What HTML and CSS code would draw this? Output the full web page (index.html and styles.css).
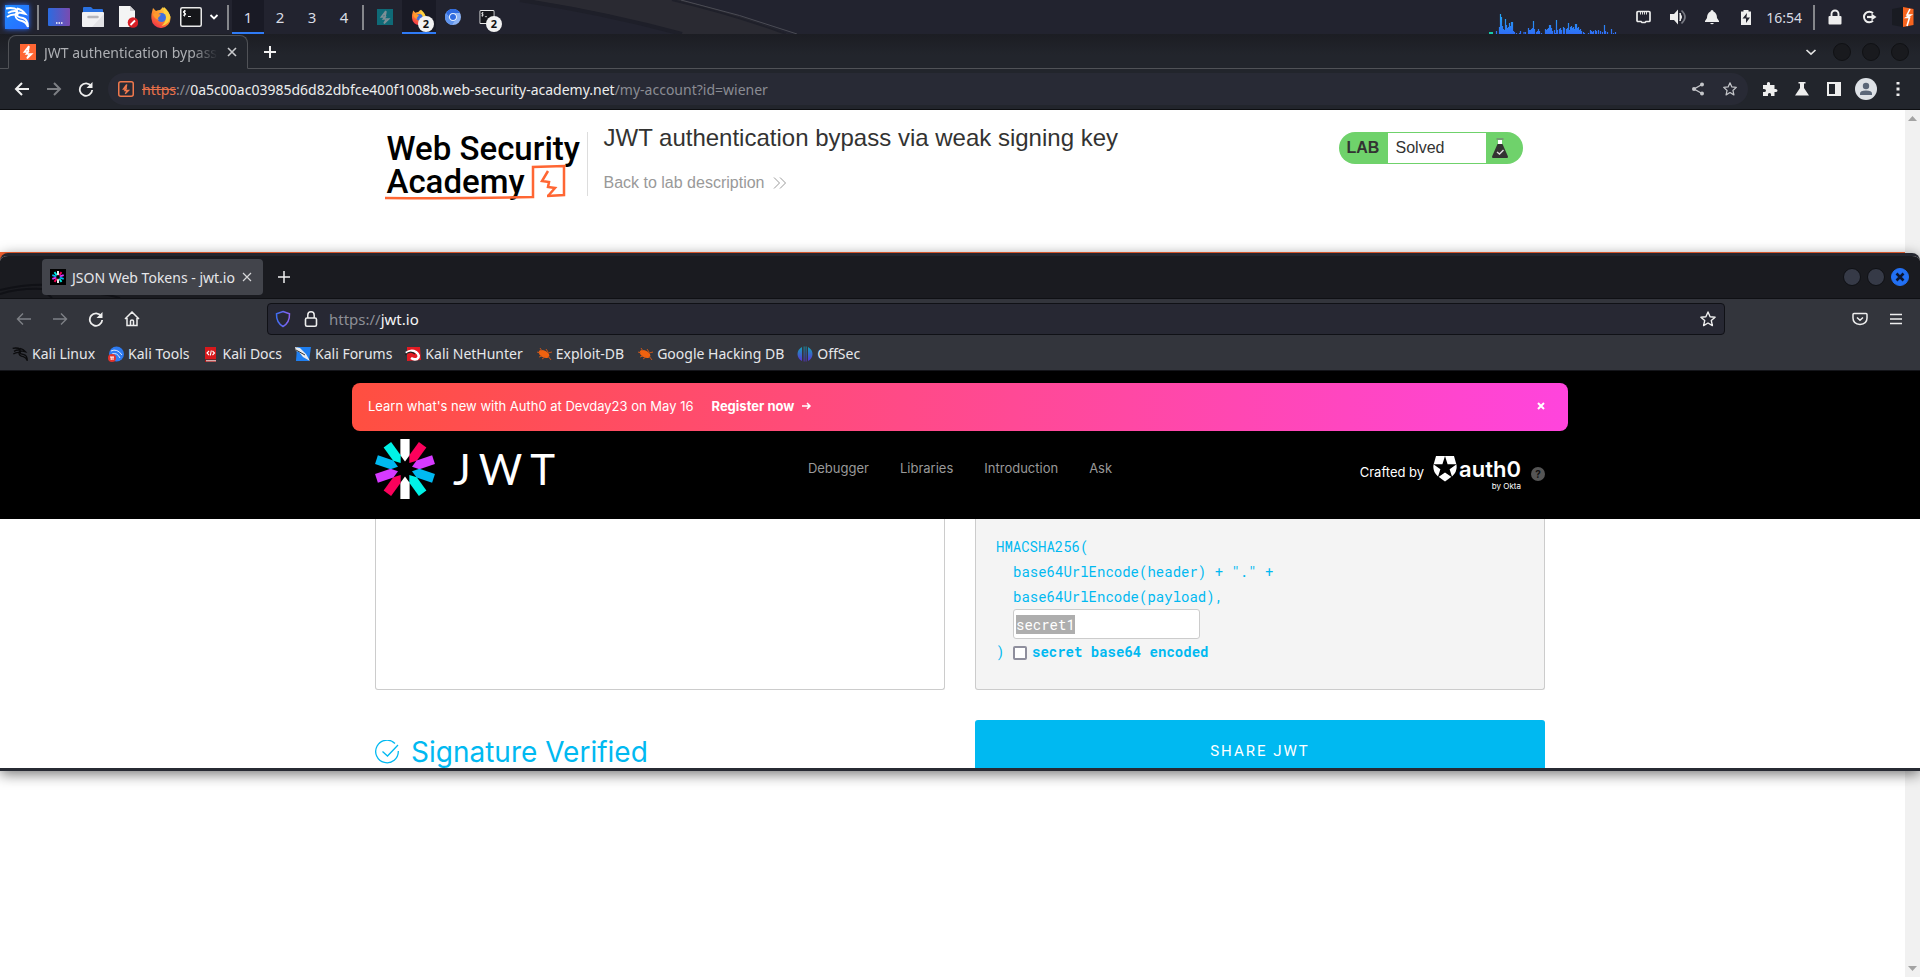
FILE: index.html
```html
<!DOCTYPE html>
<html lang="en">
<head>
<meta charset="utf-8">
<title>Desktop</title>
<link rel="stylesheet" href="styles.css">
</head>
<body>
<svg class="defs" aria-hidden="true">
  <defs>
    <linearGradient id="g-blue" x1="0" y1="0" x2="1" y2="1"><stop offset="0" stop-color="#1e8bff"/><stop offset="1" stop-color="#2a6bff"/></linearGradient>
    <linearGradient id="g-desk" x1="0" y1="0" x2="1" y2="0"><stop offset="0" stop-color="#2b6be0"/><stop offset="1" stop-color="#7a4bb0"/></linearGradient>
    <linearGradient id="g-fox" x1="0.8" y1="0" x2="0.2" y2="1"><stop offset="0" stop-color="#ffe04a"/><stop offset="0.5" stop-color="#ff8a2a"/><stop offset="1" stop-color="#f0284e"/></linearGradient>
    <linearGradient id="g-cpu" x1="0" y1="0" x2="0" y2="20" gradientUnits="userSpaceOnUse"><stop offset="0" stop-color="#22a8f5"/><stop offset="1" stop-color="#2f6df6"/></linearGradient>
    <linearGradient id="g-shield" x1="0" y1="0" x2="1" y2="0"><stop offset="0" stop-color="#3d6df0"/><stop offset="1" stop-color="#8a62f0"/></linearGradient>
    <linearGradient id="g-off" x1="0" y1="0" x2="0" y2="1"><stop offset="0" stop-color="#12a5b8"/><stop offset="1" stop-color="#5b2fd6"/></linearGradient>
    <symbol id="i-fox" viewBox="0 0 22 22">
      <path d="M2 6l1-4 3 3q2-1 4-1l3-3 2 3q5 3 5.500 8a9.500 9.500 0 0 1-19 1Q1 9 2 6z" fill="url(#g-fox)"/>
      <path d="M14 1q5 4 6.500 10-2 8-9 9 7-6 2-13z" fill="#ffd23e"/>
      <circle cx="11.500" cy="11.500" r="4.500" fill="#3f6fe0"/>
      <path d="M3 8q3-2 5 0l3 .5-2 2.500q-2 1 0 3-5-1-6-6z" fill="#ff9b2e"/>
    </symbol>
    <symbol id="i-term" viewBox="0 0 22 20">
      <rect x=".75" y=".75" width="20.500" height="18.500" rx="1.500" fill="#15161a" stroke="#e9e9e9" stroke-width="1.500"/>
      <path d="M6 4H3.800q-1 1.200 0 2H5.200q1 1.200 0 2.200H3M4.500 3v6.500M8 9.500h3" stroke="#f2f2f2" fill="none"/>
    </symbol>
    <symbol id="i-bolt" viewBox="0 0 16 16"><path d="M9 2L4.500 8H8L6.500 10H11.500L7 14.500 9 11 M9 2L8 7.500" fill="none" stroke="currentColor" stroke-width="1.700"/></symbol>
    <symbol id="i-reload" viewBox="0 0 16 16"><path d="M13.200 5.200A6.200 6.200 0 1 0 14.200 9" fill="none" stroke="currentColor" stroke-width="1.800"/><path d="M14.500 1v6h-6z" fill="currentColor"/></symbol>
    <symbol id="i-star" viewBox="0 0 18 18"><path d="M9 2l2.100 4.700 5 .5-3.800 3.400 1.100 5L9 13l-4.400 2.600 1.100-5L1.900 7.200l5-.5z" fill="none" stroke="currentColor" stroke-width="1.400" stroke-linejoin="round"/></symbol>
    <symbol id="i-dragon" viewBox="0 0 24 24"><path d="M1 3.500q7-1.500 12 1.500M3 8q5-3 10-1.500M2 12q4-3 9-2.500M12 3.500q5 1 8.500 5.500l-6-1.500q-3.500 2-1.500 4 2 1 5 1.500 5 1.500 5 9-2-5-6-6-6-1-6.500-5 0-3 2.500-5" fill="none" stroke="currentColor" stroke-width="1.900"/></symbol>
    <symbol id="i-bug" viewBox="0 0 16 16"><ellipse cx="8" cy="8" rx="5.800" ry="3.400" transform="rotate(28 8 8)" fill="#f0620f"/><path d="M1 6l3 1M4 2l2 3M10 3l2 3M12 7l4-1M3 11l3-1M6 13l3-2M12 10l3 4" stroke="#c9561a"/></symbol>
    <symbol id="i-ray" viewBox="0 0 100 100" overflow="visible"><path d="M42.300 0H57.700V27.200L50 37.700 42.300 27.200z"/></symbol>
    <symbol id="i-jwt" viewBox="0 0 100 100">
      <use href="#i-ray" fill="#fff"/>
      <use href="#i-ray" fill="#fb015b" transform="rotate(36 50 50)"/>
      <use href="#i-ray" fill="#d63aff" transform="rotate(72 50 50)"/>
      <use href="#i-ray" fill="#00b9f1" transform="rotate(108 50 50)"/>
      <use href="#i-ray" fill="#00f2e6" transform="rotate(144 50 50)"/>
      <use href="#i-ray" fill="#fff" transform="rotate(180 50 50)"/>
      <use href="#i-ray" fill="#fb015b" transform="rotate(216 50 50)"/>
      <use href="#i-ray" fill="#d63aff" transform="rotate(252 50 50)"/>
      <use href="#i-ray" fill="#00b9f1" transform="rotate(288 50 50)"/>
      <use href="#i-ray" fill="#00f2e6" transform="rotate(324 50 50)"/>
    </symbol>
  </defs>
</svg>

<div class="desktop">
  <header class="panel">
    <svg class="panel-art" viewBox="0 0 300 34" width="300" height="34" aria-hidden="true">
      <path d="M30 0H182Q240 14 288 34H180Q110 12 30 0z" fill="#2a2a32"/>
      <path d="M20 0Q105 13 182 34" fill="none" stroke="#1e1f29" stroke-width="4"/>
      <path d="M181 0Q240 14 297 34" fill="none" stroke="#4a4b54"/>
      <path d="M172 0Q235 15 286 34" fill="none" stroke="#1f202a" stroke-width="2"/>
    </svg>
    <button class="kali" aria-label="Applications"><svg width="24" height="24" viewBox="0 0 24 24"><rect width="24" height="24" fill="url(#g-blue)"/><use href="#i-dragon" color="#fff" width="24" height="24"/></svg></button>
    <span class="sep"></span>
    <div class="launchers">
      <button aria-label="Show desktop"><svg width="22" height="18" viewBox="0 0 22 18"><rect width="22" height="18" rx="1" fill="url(#g-desk)"/><path d="M8 15h1.500M10.500 15H12M13 15h1.500" stroke="#fff" stroke-width="1.500"/></svg></button>
      <button aria-label="Files"><svg width="22" height="22" viewBox="0 0 22 22"><path d="M1 2q0-1 1-1h7l2 2h9q1 0 1 1v5H1z" fill="#2a71e0"/><rect y="6" width="22" height="15" rx="1" fill="#f1f1f3"/><path d="M22 8v12q0 1-1 1H10z" fill="#e2e2e5"/><path d="M6.500 11h9" stroke="#b5b5bb" stroke-width="2.500" stroke-linecap="round"/></svg></button>
      <button aria-label="Text editor"><svg width="22" height="22" viewBox="0 0 22 22"><path d="M3 0h11l5 5v16H3z" fill="#f4f4f4"/><path d="M14 0v5h5z" fill="#cfcfd2"/><circle cx="17" cy="16.500" r="5.300" fill="#d81f26"/><path d="M14.500 19l4.500-4.500" stroke="#fff" stroke-width="1.800"/></svg></button>
      <button aria-label="Firefox"><svg width="22" height="22"><use href="#i-fox"/></svg></button>
    </div>
    <button class="term" aria-label="Terminal"><svg width="22" height="20"><use href="#i-term"/></svg></button>
    <button class="chev" aria-label="More terminals"><svg width="12" height="12" viewBox="0 0 12 12"><path d="M2.500 4L6 7.500 9.500 4" fill="none" stroke="#fff" stroke-width="1.800"/></svg></button>
    <span class="sep"></span>
    <nav class="spaces" aria-label="Workspaces">
      <button class="space active">1</button><button class="space">2</button><button class="space">3</button><button class="space">4</button>
    </nav>
    <span class="sep"></span>
    <div class="tasks">
      <button class="task" aria-label="Burp Suite"><svg width="16" height="16"><rect width="16" height="16" fill="#0f6a77"/><use href="#i-bolt" color="#7d8f96" width="16" height="16"/></svg></button>
      <button class="task active" aria-label="Firefox windows"><svg width="16" height="16"><use href="#i-fox"/></svg><span class="badge">2</span></button>
      <button class="task" aria-label="Chromium"><svg width="16" height="16" viewBox="0 0 16 16"><circle cx="8" cy="8" r="8" fill="#8db4f5"/><path d="M1 4A8 8 0 0 1 15 4H8a4 4 0 0 0-4 4z" fill="#2f6be0"/><path d="M1 4A8 8 0 0 0 7 16l3-4.500A4 4 0 0 1 4 9z" fill="#5f93ec"/><circle cx="8" cy="8" r="3.800" fill="#fff"/><circle cx="8" cy="8" r="3" fill="#2f6be0"/></svg></button>
      <button class="task" aria-label="Terminal windows"><svg width="16" height="14" viewBox="0 0 22 20"><use href="#i-term"/></svg><span class="badge">2</span></button>
    </div>
    <svg class="cpu" width="128" height="20" viewBox="0 0 128 20" aria-label="CPU graph">
      <path d="M0 19h4" stroke="#19c8a8" stroke-width="2"/>
      <path d="M7.500 20v-3M10.500 20v-7M11.500 20v-20M12.500 20v-17M13.500 20v-8M14.500 20v-5M15.500 20v-4M16.500 20v-15M17.500 20v-9M18.500 20v-6M19.500 20v-7M20.500 20v-11M21.500 20v-8M22.500 20v-12M23.500 20v-12M24.500 20v-3M25.500 20v-2M27.500 20v-1M30.500 20v-1M31.500 20v-3M35 20v-2M36.500 20v-2M39.500 20v-6M40.500 20v-4M41.500 20v-4M42.500 20v-5M43.500 20v-6M44.500 20v-13M45.500 20v-5M47.500 20v-2M48.500 20v-3M49.500 20v-5M50.500 20v-3M52.500 20v-1M56.500 20v-5M57.500 20v-4M58.500 20v-5M59.500 20v-6M60.500 20v-9M61.500 20v-9M62.500 20v-6M63.500 20v-3M65.500 20v-4M66.500 20v-1M67.500 20v-14M68.500 20v-4M70.500 20v-5M71.500 20v-6M72.500 20v-4M74.500 20v-7M75.500 20v-6M77.500 20v-5M78.500 20v-6M79.500 20v-11M80.500 20v-4M81.500 20v-7M82.500 20v-8M83.500 20v-6M84.500 20v-7M85.500 20v-5M86.500 20v-10M87.500 20v-10M88.500 20v-6M89.500 20v-7M90.500 20v-4M91.500 20v-5M92.500 20v-3M94.500 20v-2M95.500 20v-1M99.500 20v-1M101.500 20v-4M102.500 20v-3M103.500 20v-2M104.500 20v-3M106.500 20v-4M107.500 20v-3M109.500 20v-4M111.500 20v-3M113.500 20v-2M115.500 20v-9M116.500 20v-3M118.500 20v-2M122.500 20v-5M124.500 20v-1M126.500 20v-2" stroke="url(#g-cpu)" stroke-width="1.200"/>
    </svg>
    <div class="tray">
      <button class="tool wide" aria-label="Network"><svg width="16" height="16" viewBox="0 0 16 16"><path d="M3 2.500h11q1 0 1 1v8q0 1-1 1h-3l-1 1H7l-1-1H3q-1 0-1-1v-8q0-1 1-1z" fill="none" stroke="#eee" stroke-width="1.700"/><path d="M5.500 3v2.500M7.500 3v2.500M9.500 3v2.500M11.500 3v2.500" stroke="#ddd"/></svg></button>
      <button class="tool" aria-label="Volume"><svg width="18" height="18" viewBox="0 0 18 18"><path d="M1 6h4l4-4.500v15L5 12H1z" fill="#eee"/><path d="M11 5q3 4 0 8z" fill="#eee" stroke="#eee"/><path d="M12.500 2.500q7 6.500 0 13" fill="none" stroke="#777982" stroke-width="1.700"/></svg></button>
      <button class="tool" aria-label="Notifications"><svg width="16" height="16" viewBox="0 0 16 16"><path d="M8 1q1.500 0 1.500 1.500Q13 4 13 9l2 3v1H1v-1l2-3q0-5 3.500-6.500Q6.500 1 8 1zM6 14h4q-2 2.500-4 0z" fill="#eee"/></svg></button>
      <button class="tool" aria-label="Power"><svg width="16" height="16" viewBox="0 0 16 16"><path d="M3 2.500h2.500V1h5v1.500H13V16H3z" fill="#eee"/><path d="M9 4L4.500 9.500H8V14l4-5.500H8.500z" fill="#22232e"/></svg></button>
      <time class="clock">16:54</time>
      <span class="sep"></span>
      <button class="tool" aria-label="Lock"><svg width="14" height="16" viewBox="0 0 14 16"><rect x=".5" y="7" width="13" height="8.500" rx="1" fill="#eee"/><path d="M3.500 7.500V5a3.500 3.500 0 0 1 7 0v2.500" fill="none" stroke="#eee" stroke-width="1.900"/></svg></button>
      <button class="tool" aria-label="Log out"><svg width="16" height="16" viewBox="0 0 16 16"><path d="M12 4.200A5.300 5.300 0 1 0 12 11.800" fill="none" stroke="#eee" stroke-width="2"/><path d="M6 8h5" stroke="#eee" stroke-width="2.200"/><path d="M10.500 4.500L15.500 8l-5 3.500z" fill="#eee"/></svg></button>
      <button class="tool" aria-label="Burp tray"><svg width="22" height="22" viewBox="0 0 22 22"><path d="M0 3l11-2v20L0 19z" fill="#191b22"/><path d="M11 1l10.500 2v16L11 21z" fill="#f8641e"/><path d="M18 3l-3 6h3.500l-4 2.500h3L15 20" stroke="#fff" stroke-width="1.600" fill="none"/></svg></button>
    </div>
  </header>

  <section class="chrome">
    <div class="strip">
      <div class="ctab">
        <svg width="16" height="16"><rect width="16" height="16" fill="#ff6633"/><use href="#i-bolt" color="#fff" width="16" height="16"/></svg>
        <span class="ctab-title">JWT authentication bypass via weak signing key</span>
        <button aria-label="Close tab"><svg width="12" height="12" viewBox="0 0 12 12"><path d="M2 2l8 8M10 2l-8 8" stroke="#c9cacd" stroke-width="1.600"/></svg></button>
      </div>
      <button class="cnew" aria-label="New tab"><svg width="14" height="14" viewBox="0 0 14 14"><path d="M7 1v12M1 7h12" stroke="#f1f1f1" stroke-width="2"/></svg></button>
      <div class="cwin">
        <button class="cdown" aria-label="Search tabs"><svg width="12" height="12" viewBox="0 0 12 12"><path d="M1.500 4L6 8.200 10.500 4" fill="none" stroke="#e2e2e2" stroke-width="1.700"/></svg></button>
        <button class="dot" aria-label="Minimize"></button><button class="dot" aria-label="Maximize"></button><button class="dot" aria-label="Close"></button>
      </div>
    </div>
    <div class="cbar">
      <button class="cnav" aria-label="Back"><svg width="16" height="16" viewBox="0 0 16 16"><path d="M15 8H2M8 2L2 8l6 6" fill="none" stroke="#f1f1f1" stroke-width="2"/></svg></button>
      <button class="cnav" aria-label="Forward"><svg width="16" height="16" viewBox="0 0 16 16"><path d="M1 8h13M8 2l6 6-6 6" fill="none" stroke="#7d7f84" stroke-width="2"/></svg></button>
      <button class="cnav light" aria-label="Reload"><svg width="16" height="16"><use href="#i-reload"/></svg></button>
      <div class="curl">
        <svg width="16" height="16" viewBox="0 0 16 16"><rect x=".75" y=".75" width="14.500" height="14.500" rx="2" fill="none" stroke="#f0784c" stroke-width="1.500"/><use href="#i-bolt" color="#f0784c" x="2" y="2" width="12" height="12"/></svg>
        <span class="curl-text"><s>https</s>://<b>0a5c00ac03985d6d82dbfce400f1008b.web-security-academy.net</b>/my-account?id=wiener</span>
        <button class="cicon" aria-label="Share"><svg width="14" height="14" viewBox="0 0 14 14"><path d="M11 2.500L3 7l8 4.500" fill="none" stroke="#c4c5c9" stroke-width="1.400"/><circle cx="11" cy="2.500" r="2" fill="#c4c5c9"/><circle cx="3" cy="7" r="2" fill="#c4c5c9"/><circle cx="11" cy="11.500" r="2" fill="#c4c5c9"/></svg></button>
        <button class="cicon grey" aria-label="Bookmark"><svg width="16" height="16"><use href="#i-star"/></svg></button>
      </div>
      <div class="cext">
        <button class="cicon" aria-label="Extensions"><svg width="16" height="16" viewBox="0 0 16 16"><path d="M1 4h4q-.5-3 1.500-3T8 4h4.500v4q3-.5 3 1.500t-3 1.500V15H9q.5-3-1.500-3T6 15H1v-4q3 .5 3-1.500T1 8z" fill="#eee"/></svg></button>
        <button class="cicon" aria-label="Labs"><svg width="16" height="16" viewBox="0 0 16 16"><path d="M4.500 1h7v1.500H10V7l5 7.500H1L6 7V2.500H4.500z" fill="#eee"/></svg></button>
        <button class="cicon" aria-label="Side panel"><svg width="14" height="14" viewBox="0 0 14 14"><path d="M0 0h14v14H0zM2 2v10h6V2z" fill="#eee" fill-rule="evenodd"/></svg></button>
        <button class="cicon" aria-label="Profile"><svg width="22" height="22" viewBox="0 0 22 22"><circle cx="11" cy="11" r="11" fill="#dde1e6"/><circle cx="11" cy="8" r="3.200" fill="#5a6678"/><path d="M5 17v-1.500q0-3 6-3t6 3V17z" fill="#5a6678"/></svg></button>
        <button class="cicon" aria-label="Menu"><svg width="4" height="14" viewBox="0 0 4 14"><path d="M.5 1h3M.5 7h3M.5 13h3" stroke="#eee" stroke-width="2.800"/></svg></button>
      </div>
    </div>
    <div class="page">
      <main class="lab">
        <div class="lab-in">
          <div class="wsa">
            <span class="wsa-text">Web Security<br>Academy</span>
            <svg class="wsa-art" width="190" height="38" viewBox="0 0 190 38"><path d="M1 34q70 1 148-1V3l31-1v29l-17 1" fill="none" stroke="#ff6633" stroke-width="2.500"/><path d="M164 7l-6 10 7 1-1 5 7 1-7 8" fill="none" stroke="#ff6633" stroke-width="2.500"/></svg>
          </div>
          <div class="lab-title">
            <h2>JWT authentication bypass via weak signing key</h2>
            <a href="#">Back to lab description <svg width="14" height="12" viewBox="0 0 14 12"><path d="M1 .5L6.500 6 1 11.500M7 .5L12.500 6 7 11.500" fill="none" stroke="#999" stroke-width="1"/></svg></a>
          </div>
          <div class="solved"><b>LAB</b><span>Solved</span><svg width="16" height="20" viewBox="0 0 16 20"><path d="M4.500 1h7" stroke="#777" stroke-width="1.200"/><path d="M6 2h4v4H6z" fill="#fff"/><path d="M5.500 6h5L16 18.500q0 1.500-1 1.500H1q-1 0-1-1.500z" fill="#333332"/><path d="M5 14l2.500 2L11.500 12" fill="none" stroke="#ddd" stroke-width="1.400"/></svg></div>
        </div>
        <div class="lab-rule"></div>
      </main>
      <div class="scroll"><svg width="9" height="5" viewBox="0 0 9 5"><path d="M4.500 0L9 5H0z" fill="#a3a3a3"/></svg><svg width="9" height="5" viewBox="0 0 9 5"><path d="M4.500 5L9 0H0z" fill="#a3a3a3"/></svg></div>
    </div>
  </section>

  <section class="fx">
    <div class="fx-strip">
      <svg class="fx-art" width="130" height="16" viewBox="0 0 130 16" aria-hidden="true"><path d="M0 8Q25 2 50 3t20 8Q100 10 120 16M0 12Q20 6 42 7l10 9" fill="none" stroke="#101116" stroke-width="2"/></svg>
      <div class="fx-tab">
        <svg width="16" height="16" viewBox="0 0 16 16"><rect width="16" height="16" fill="#000"/><use href="#i-jwt" x="2" y="2" width="12" height="12"/></svg>
        <span>JSON Web Tokens - jwt.io</span>
        <button aria-label="Close tab"><svg width="10" height="10" viewBox="0 0 10 10"><path d="M1 1l8 8M9 1L1 9" stroke="#d6d6d8" stroke-width="1.200"/></svg></button>
      </div>
      <button class="fx-new" aria-label="New tab"><svg width="14" height="14" viewBox="0 0 14 14"><path d="M7 1v12M1 7h12" stroke="#f1f1f1" stroke-width="1.500"/></svg></button>
      <div class="fx-win"><button class="fdot" aria-label="Minimize"></button><button class="fdot" aria-label="Maximize"></button><button class="fdot close" aria-label="Close"><svg width="10" height="10" viewBox="0 0 10 10"><path d="M1.500 1.500l7 7M8.500 1.500l-7 7" stroke="#0b1530" stroke-width="2.600"/></svg></button></div>
    </div>
    <div class="fx-bar">
      <div class="fx-nav">
        <button aria-label="Back"><svg width="16" height="16" viewBox="0 0 16 16"><path d="M15 8H1.500M7 2.500L1.500 8 7 13.500" fill="none" stroke="#7e8086" stroke-width="1.400"/></svg></button>
        <button aria-label="Forward"><svg width="16" height="16" viewBox="0 0 16 16"><path d="M1 8h13.500M9 2.500L14.500 8 9 13.500" fill="none" stroke="#7e8086" stroke-width="1.400"/></svg></button>
        <button class="light" aria-label="Reload"><svg width="16" height="16"><use href="#i-reload"/></svg></button>
        <button aria-label="Home"><svg width="16" height="16" viewBox="0 0 16 16"><path d="M1 8l7-7 7 7M3 7v7.500h10V7M6.500 14v-4q0-1 1.500-1t1.500 1v4" fill="none" stroke="#eee" stroke-width="1.500"/></svg></button>
      </div>
      <div class="fx-url">
        <svg width="16" height="18" viewBox="0 0 16 18"><path d="M8 1.500l6.500 2.300q.3 9-6.500 12.700Q1.200 12.800 1.500 3.800z" fill="none" stroke="url(#g-shield)" stroke-width="1.500"/></svg>
        <svg width="14" height="18" viewBox="0 0 14 18"><rect x="1.500" y="8" width="11" height="8.300" rx="1.500" fill="none" stroke="#eee" stroke-width="1.600"/><path d="M3.800 8V5a3.200 3.200 0 0 1 6.400 0v3" fill="none" stroke="#eee" stroke-width="1.500"/></svg>
        <span class="fx-addr">https://<b>jwt.io</b></span>
        <button class="light" aria-label="Bookmark"><svg width="18" height="18"><use href="#i-star"/></svg></button>
      </div>
      <div class="fx-end">
        <button aria-label="Pocket"><svg width="16" height="14" viewBox="0 0 16 14"><path d="M2 1.500h12q1 0 1 1V6q0 6-7 6.500Q1 12 1 6V2.500q0-1 1-1z" fill="none" stroke="#eee" stroke-width="1.500"/><path d="M5 5.500l3 2.800 3-2.800" fill="none" stroke="#eee" stroke-width="1.500"/></svg></button>
        <button aria-label="Menu"><svg width="12" height="12" viewBox="0 0 12 12"><path d="M0 1.500h12M0 6h12M0 10.500h12" stroke="#eee" stroke-width="1.300"/></svg></button>
      </div>
    </div>
    <nav class="marks">
      <a href="#"><svg width="16" height="16" viewBox="0 0 24 24"><use href="#i-dragon" color="#0b0b0d"/></svg>Kali Linux</a>
      <a href="#"><svg width="16" height="16" viewBox="0 0 16 16"><circle cx="8.500" cy="8" r="7.500" fill="#2d7bf2"/><path d="M3 5q6-3 11 4M4 8q5-2 8 4" stroke="#dbe8ff" fill="none"/><circle cx="4" cy="12" r="4" fill="#e0322c"/><path d="M2 11h4M3.200 11v3M5 11v3" stroke="#fff"/></svg>Kali Tools</a>
      <a href="#"><svg width="16" height="16" viewBox="0 0 16 16"><path d="M2 1h11v12H2z" fill="#d8191c"/><path d="M2 13.500h11V16H2z" fill="#a51416"/><path d="M3 14.800h10" stroke="#eee"/><path d="M6 5L4 7l2 2M9.500 5l2 2-2 2M8.300 4.500L7.300 9.500" fill="none" stroke="#fff" stroke-width="1.100"/></svg>Kali Docs</a>
      <a href="#"><svg width="16" height="16" viewBox="0 0 16 16"><path d="M2 1h14l-2 14H1z" fill="#1f7ff0"/><path d="M0 1l5 1 6 6 4 7-7-4-4-5-3-1z" fill="#e8edf2"/><path d="M1 4l9 5" stroke="#333"/></svg>Kali Forums</a>
      <a href="#"><svg width="16" height="16" viewBox="0 0 16 16"><path d="M2 1h13l1 13-14 1z" fill="#e21b23"/><path d="M1 7q5-4 10-1 5 4 1 7-3 1-6-1" fill="none" stroke="#fff" stroke-width="2.600"/><path d="M0 9q5-5 10-1" fill="none" stroke="#222" stroke-width="1.200"/></svg>Kali NetHunter</a>
      <a href="#"><svg width="16" height="16"><use href="#i-bug"/></svg>Exploit-DB</a>
      <a href="#"><svg width="16" height="16"><use href="#i-bug"/></svg>Google Hacking DB</a>
      <a href="#"><svg width="16" height="16" viewBox="0 0 16 16"><path d="M5 1v14Q.5 12.500.5 8T5 1zM11 1v14q4.500-2.500 4.500-7T11 1zM6.700.5h.8v15h-.8zM8.700.5h.8v15h-.8z" fill="url(#g-off)"/></svg>OffSec</a>
    </nav>
    <div class="jwt-head">
      <div class="promo"><span>Learn what's new with Auth0 at Devday23 on May 16</span><a href="#">Register now <svg width="10" height="10" viewBox="0 0 10 10"><path d="M0 5h8M5 2l3 3-3 3" fill="none" stroke="#fff" stroke-width="1.500"/></svg></a><button aria-label="Dismiss"><svg width="8" height="8" viewBox="0 0 8 8"><path d="M1 1l6 6M7 1L1 7" stroke="#fff" stroke-width="2"/></svg></button></div>
      <div class="jwt-nav">
        <a class="jwt-logo" href="#" aria-label="JWT"><svg width="60" height="60"><use href="#i-jwt"/></svg><span>J</span><span>W</span><span>T</span></a>
        <nav><a href="#">Debugger</a><a href="#">Libraries</a><a href="#">Introduction</a><a href="#">Ask</a></nav>
        <div class="crafted">
          <span>Crafted by</span>
          <svg width="24" height="26" viewBox="0 0 24 26"><path d="M3 0h18l2.500 9q1 6.500-4 11L12 25.500 4.500 20q-5-4.500-4-11z" fill="#fff"/><path d="M12 0l2.600 8.200H23.600L16.600 13.200 19.300 21.600 12 16.600 4.700 21.600 7.400 13.200.4 8.200H9.400z" fill="#000"/></svg>
          <span class="auth0"><b>auth0</b><small>by Okta</small></span>
          <button class="help" aria-label="Help">?</button>
        </div>
      </div>
    </div>
    <div class="jwt-body">
      <div class="cols">
        <div class="encoded"></div>
        <div class="decoded">
          <div>HMACSHA256(</div>
          <div class="in">base64UrlEncode(header) + "." +</div>
          <div class="in">base64UrlEncode(payload),</div>
          <input class="secret" type="text" value="secret1" aria-label="Secret">
          <div class="last"><span>)</span><input type="checkbox" id="b64"><label for="b64">secret base64 encoded</label></div>
        </div>
        <div class="verified"><svg width="24" height="24" viewBox="0 0 24 24"><path d="M20 3.500A11.300 11.300 0 1 0 23.300 11" fill="none" stroke="#00b9f1" stroke-width="1.300"/><path d="M7.500 11.500l5 4.500L23 5" fill="none" stroke="#00b9f1" stroke-width="1.300"/></svg>Signature Verified</div>
        <button class="share">SHARE JWT</button>
      </div>
    </div>
  </section>
</div>
</body>
</html>
```
FILE: styles.css
```css
* { box-sizing: border-box; }
body { margin: 0; font-family: "Noto Sans", sans-serif; font-size: 14px; }
button { border: 0; padding: 0; margin: 0; background: none; font: inherit; color: inherit; display: flex; align-items: center; justify-content: center; }
a { color: inherit; text-decoration: none; }
svg { display: block; flex: none; }
.defs { position: absolute; width: 0; height: 0; }
.light { color: #eee; }
.grey { color: #c4c5c9; }

.desktop { position: relative; display: flex; flex-direction: column; min-height: 100vh; overflow: hidden; background: #fff; }

/* Desktop panel */
.panel { position: relative; display: flex; align-items: center; height: 34px; padding-left: 5px; background: #22232f; color: #d9dce4; }
.panel > * { position: relative; }
.panel .panel-art { position: absolute; left: 500px; top: 0; }
.sep { width: 2px; height: 25px; background: #85868b; }
.kali { margin-right: 8px; box-shadow: 0 0 5px #2a6bff; }
.launchers { display: flex; gap: 12px; margin: 0 8px 0 9px; }
.chev { margin: 0 7px 0 6px; }
.spaces { display: flex; align-self: stretch; margin: 0 2px 0 3px; }
.space { width: 32px; font-size: 15px; }
.active { background: #191a25; box-shadow: inset 0 -2px #2f7bf6; }
.tasks { display: flex; align-self: stretch; margin-left: 4px; }
.task { position: relative; width: 34px; }
.badge { position: absolute; left: 16px; top: 16px; width: 16px; height: 16px; border-radius: 8px; background: #f2f2f2; color: #111; font-size: 11px; line-height: 16px; font-weight: 700; text-align: center; }
.cpu { margin-left: auto; align-self: flex-end; }
.tray { display: flex; align-items: center; margin-left: 8px; }
.tool { width: 34px; }
.tool.wide { width: 36px; }
.clock { padding: 0 11px 0 3px; }
.tray .sep { margin-right: 3px; }

/* Back browser window */
.chrome { flex: 1; display: flex; flex-direction: column; }
.strip { display: flex; height: 35px; padding-left: 8px; background: linear-gradient(#1c1d23, #22252c 60%); box-shadow: inset 0 -1px #505257; }
.ctab { display: flex; align-items: center; gap: 8px; width: 240px; margin-top: 1px; padding: 0 9px 0 11px; border: 1px solid #505257; border-bottom-color: #22252c; border-radius: 8px 8px 0 0; background: #22252c; color: #adafb3; }
.ctab-title { flex: 1; min-width: 0; overflow: hidden; white-space: nowrap; -webkit-mask-image: linear-gradient(90deg, #000 85%, transparent); mask-image: linear-gradient(90deg, #000 85%, transparent); }
.cnew { width: 44px; }
.cwin { display: flex; align-items: center; gap: 11px; margin-left: auto; padding-right: 11px; }
.cdown { margin-right: 5px; }
.dot { width: 18px; height: 18px; border-radius: 9px; background: #191a1e; border: 1px solid #101114; }
.cbar { display: flex; align-items: center; height: 41px; padding: 0 6px; border-bottom: 1px solid #0d0e11; background: #22252c; }
.cnav { width: 32px; }
.curl { flex: 1; display: flex; align-items: center; height: 32px; margin-left: 6px; padding: 0 10px; border-radius: 16px; background: #282a35; }
.curl-text { flex: 1; margin-left: 8px; color: #8a8c93; white-space: nowrap; }
.curl-text b { font-weight: 400; color: #eceded; }
.curl-text s { color: #e8714a; }
.curl .cicon { width: 16px; margin-left: 16px; }
.cext { display: flex; padding-left: 6px; }
.cext .cicon { width: 32px; }
.page { flex: 1; display: flex; background: #fff; }
.scroll { width: 15px; display: flex; flex-direction: column; justify-content: space-between; align-items: center; padding: 6px 0; background: #f1f1f1; }
.lab { flex: 1; font-family: "Liberation Sans", Arial, sans-serif; color: #333332; }
.lab-in { display: flex; align-items: flex-start; width: 1140px; max-width: 100%; height: 142px; margin: 0 auto; padding-top: 14px; }
.lab-rule { height: 8px; background: #ff6633; }
.wsa { position: relative; width: 205px; height: 64px; margin-top: 8px; padding-left: 4px; border-right: 1px solid #ddd; }
.wsa-text { display: block; font: 500 33px/33px Roboto, sans-serif; color: #000; white-space: nowrap; }
.wsa-art { position: absolute; left: 1px; top: 32px; }
.lab-title { margin-left: 16px; }
.lab-title h2 { margin: 0; font-size: 24px; line-height: 28px; font-weight: 400; }
.lab-title a { display: flex; align-items: center; gap: 9px; margin-top: 19px; font-size: 16px; line-height: 24px; color: #999; }
.solved { display: flex; align-items: center; margin: 8px 0 0 auto; height: 32px; width: 184px; padding: 1px; border-radius: 16px; background: #6fd26b; font-size: 16px; }
.solved b { width: 48px; padding-left: 7px; }
.solved span { width: 98px; height: 30px; padding-left: 8px; line-height: 29px; background: #fff; }
.solved svg { margin-left: 6px; }

/* Front browser window */
.fx { position: absolute; left: 0; right: 0; top: 253px; height: 518px; display: flex; flex-direction: column; overflow: hidden; border-top: 3px solid #23252e; border-bottom: 3px solid #272a33; border-radius: 8px 8px 0 0; background: #fff; box-shadow: 0 3px 14px rgba(0, 0, 0, .55); color: #e6e7ea; }
.fx-strip { position: relative; flex: none; display: flex; align-items: center; height: 43px; padding: 0 11px 0 42px; background: #1a1b20; border-bottom: 1px solid #0f1014; }
.fx-art { position: absolute; left: 0; bottom: 0; }
.fx-tab { position: relative; display: flex; align-items: center; gap: 6px; width: 221px; height: 36px; padding: 0 11px 0 8px; border-radius: 4px; background: #42444b; white-space: nowrap; }
.fx-tab span { flex: 1; }
.fx-new { width: 42px; }
.fx-win { display: flex; gap: 6px; margin-left: auto; }
.fdot { width: 18px; height: 18px; border-radius: 9px; background: #363a47; border: 1px solid #0f1014; }
.fdot.close { background: #2270f4; border-color: #2270f4; }
.fx-bar { flex: none; display: flex; align-items: center; height: 40px; padding: 0 6px; background: #33353c; }
.fx-nav { display: flex; width: 261px; }
.fx-nav button { width: 36px; }
.fx-url { flex: 1; display: flex; align-items: center; height: 32px; padding: 0 7px; border: 1px solid #101116; border-radius: 4px; background: #272833; font-size: 15px; }
.fx-url svg + svg { margin-left: 13px; }
.fx-addr { flex: 1; margin-left: 11px; color: #8d8f96; }
.fx-addr b { font-weight: 400; color: #f5f5f6; }
.fx-end { display: flex; margin-left: 117px; }
.fx-end button { width: 36px; }
.marks { flex: none; display: flex; align-items: center; gap: 13px; height: 32px; padding: 0 0 2px 12px; background: #33353c; border-bottom: 1px solid #14151a; white-space: nowrap; }
.marks a { display: flex; align-items: center; gap: 4px; }

/* jwt.io page */
.jwt-head, .jwt-body, .help { font-family: Inter, sans-serif; }
.jwt-head { flex: none; padding: 12px 0; background: #000; color: #fff; font-size: 13px; }
.promo { display: flex; align-items: center; width: 1216px; max-width: 100%; height: 48px; margin: 0 auto; padding: 0 23px 2px 16px; border-radius: 8px; background: linear-gradient(90deg, #ff4f40, #ff44dd); }
.promo a { display: flex; align-items: center; gap: 8px; margin-left: 18px; font-weight: 700; }
.promo button { margin-left: auto; }
.jwt-nav { display: flex; align-items: center; justify-content: space-between; width: 1170px; max-width: 100%; height: 76px; margin: 0 auto; }
.jwt-logo { display: flex; align-items: center; flex: 1; font: 400 42px/44px Lato, sans-serif; gap: 8px; }
.jwt-logo svg { margin-right: 10px; }
.jwt-nav nav { display: flex; gap: 31px; padding-bottom: 2px; color: #999; }
.crafted { flex: 1; display: flex; align-items: center; justify-content: flex-end; }
.crafted > span:first-child { margin: 6px 9px 0 0; }
.auth0 { display: flex; flex-direction: column; align-items: flex-end; margin: 10px 10px 0 2px; }
.auth0 b { font-size: 22px; line-height: 24px; font-weight: 600; }
.auth0 small { font-size: 8px; line-height: 10px; }
.help { width: 14px; height: 14px; margin-top: 10px; border-radius: 7px; background: #555; color: #111; font-size: 10px; font-weight: 700; }
.jwt-body { flex: 1; overflow: hidden; background: #fff; color: #00b9f1; }
.cols { display: grid; grid-template-columns: 1fr 1fr; gap: 30px; width: 1170px; max-width: 100%; margin: 0 auto; }
.encoded, .decoded { border: 1px solid #ccc; border-top: 0; border-radius: 0 0 3px 3px; }
.decoded { padding: 15px 20px 25px; background: #f4f4f4; font: 14px/25px "Roboto Mono", "Liberation Mono", monospace; }
.in { padding-left: 17px; }
.secret { display: block; width: 187px; height: 30px; margin-left: 17px; padding: 0 2px; border: 1px solid #ccc; border-radius: 3px; font: inherit; color: #fff; background: linear-gradient(#aeaeae, #aeaeae) 2px 5px / 59px 19px no-repeat #fff; }
.last { display: flex; align-items: center; }
.last span { width: 17px; }
.last input { appearance: none; width: 14px; height: 14px; margin: 3px 5px 0 0; border: 2px solid #8f8f9d; border-radius: 2px; background: #fff; }
.last label { font-weight: 700; }
.verified { display: flex; align-items: center; gap: 12px; height: 64px; font-size: 28px; }
.share { height: 62px; border-radius: 3px 3px 0 0; background: #00b9f1; color: #fff; font: 15px Roboto, sans-serif; letter-spacing: 2px; }
```
